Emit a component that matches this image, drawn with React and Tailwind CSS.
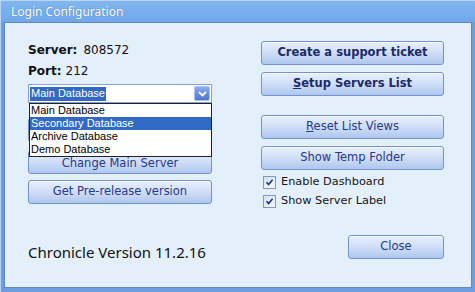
import React from 'react';

const ui = "font-['DejaVu_Sans','Liberation_Sans',sans-serif]";
const narrow = "font-['Liberation_Sans','Arial',sans-serif]";

function Btn({ children, bold, className = '' }) {
  return (
    <div
      className={`flex h-[24px] items-center justify-center rounded-[3px] border border-[#7393cf] bg-linear-to-b from-[#e7f0fd] via-[#cfdef6] to-[#aec7ef] text-[11.5px] shadow-[inset_0_1px_0_#f7faff] ${
        bold ? 'font-bold text-[#1b2a6b]' : 'text-[#28388c]'
      } ${className}`}
    >
      {children}
    </div>
  );
}

function Check({ label }) {
  return (
    <div className="flex h-[13px] items-center gap-[5px] pl-[2px]">
      <span className="flex h-[13px] w-[13px] items-center justify-center border border-[#8197c4] bg-linear-to-br from-[#d6e2f6] to-[#f4f8fe]">
        <svg width="9" height="9" viewBox="0 0 9 9">
          <path d="M1.5 4.2 L3.6 6.5 L7.6 1.8" fill="none" stroke="#22347e" strokeWidth="1.6" />
        </svg>
      </span>
      <span className="text-[11.3px] text-[#141414]">{label}</span>
    </div>
  );
}

export default function App() {
  const items = ['Main Database', 'Secondary Database', 'Archive Database', 'Demo Database'];

  return (
    <div className={`${ui} flex h-[292px] w-[475px] flex-col border-t border-l border-[#b9d3f4] bg-[#6c9de0]`}>
      {/* title bar */}
      <div className="flex h-[21px] items-center bg-linear-to-b from-[#82b6f0] to-[#70a7e8] pl-[10px]">
        <span className="font-['Noto_Sans',sans-serif] text-[12px] text-white [text-shadow:0_0_1px_#3f6fb8]">
          Login Configuration
        </span>
      </div>

      {/* body */}
      <div className="mx-[3px] mb-[4px] flex flex-1 border border-[#5f86c6] bg-[#e4effc]">
        <div className="ml-[23px] flex w-[184px] flex-col pt-[20px]">
          <div className="flex h-[14px] items-center text-[12px] text-[#111]">
            <span className="font-bold">Server:</span>
            <span className="ml-[6px]">808572</span>
          </div>
          <div className="mt-[7px] flex h-[14px] items-center text-[12px] text-[#111]">
            <span className="font-bold">Port:</span>
            <span className="ml-[4px]">212</span>
          </div>

          <div className={`${narrow} relative mt-[6px]`}>
            <div className="flex h-[19px] items-center border border-[#86a3cf] bg-white pl-[1px] pr-[1px]">
              <span className="flex h-[14px] items-center bg-[#316ac5] px-[1px] text-[11px] text-white">Main Database</span>
              <span className="ml-auto flex h-[15px] w-[16px] items-center justify-center rounded-[3px] bg-linear-to-b from-[#8eb0ee] to-[#4b70cd] shadow-[inset_0_0_0_1px_#a9c2f2]">
                <svg width="9" height="6" viewBox="0 0 9 6">
                  <path d="M1 1 L4.5 4.5 L8 1" fill="none" stroke="#fff" strokeWidth="1.8" />
                </svg>
              </span>
            </div>
            {/* open dropdown list, lies over the buttons below */}
            <div className="absolute top-full left-[1px] z-10 w-[183px] border border-[#222] bg-white">
              {items.map((t, i) => (
                <div
                  key={t}
                  className={`h-[13px] px-[1px] text-[11px] leading-[13px] ${
                    i === 1 ? 'bg-[#316ac5] text-white' : 'text-black'
                  }`}
                >
                  {t}
                </div>
              ))}
            </div>
          </div>

          {/* button hidden behind the open list */}
          <Btn className="mt-[15px]" />
          <Btn className="mt-[8px] pt-[3px]">Change Main Server</Btn>
          <Btn className="mt-[6px]">Get Pre-release version</Btn>

          <div className="mt-[38px] font-['Noto_Sans',sans-serif] text-[15px] leading-[20px] text-[#111]">
            Chronicle Version 11.2.16
          </div>
        </div>

        <div className="ml-[49px] flex w-[183px] flex-col pt-[18px]">
          <Btn bold>Create a support ticket</Btn>
          <Btn bold className="mt-[7px]">
            <span>
              <span className="underline">S</span>etup Servers List
            </span>
          </Btn>
          <Btn className="mt-[19px]">
            <span>
              <span className="underline">R</span>eset List Views
            </span>
          </Btn>
          <Btn className="mt-[7px]">Show Temp Folder</Btn>
          <div className="mt-[6px] flex flex-col gap-[6px]">
            <Check label="Enable Dashboard" />
            <Check label="Show Server Label" />
          </div>
          <Btn className="mt-[27px] ml-auto w-[96px]">Close</Btn>
        </div>
      </div>
    </div>
  );
}
